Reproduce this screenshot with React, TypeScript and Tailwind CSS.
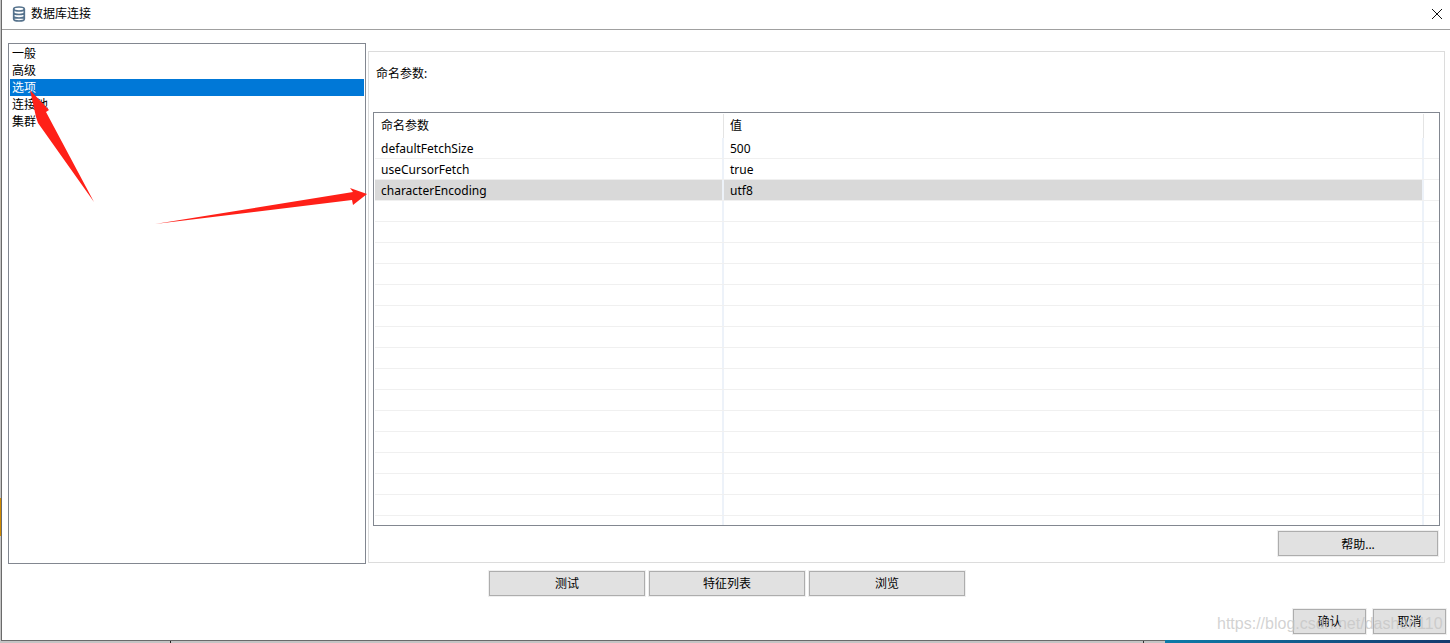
const font = "font-['Noto_Sans','Noto_Sans_CJK_SC',sans-serif]";

function Btn({ label, w }: { label: string; w: string }) {
  return (
    <div className={`${w} h-[25px] border border-[#adadad] bg-[#e1e1e1] shadow-[0_0_0_1px_#efefef] flex items-center justify-center text-[12px] text-black`}>
      {label}
    </div>
  );
}

const rows = [
  ["defaultFetchSize", "500"],
  ["useCursorFetch", "true"],
  ["characterEncoding", "utf8"],
  ...Array.from({ length: 16 }, () => ["", ""]),
];

export default function App() {
  return (
    <div className={`${font} relative w-[1450px] h-[643px] overflow-hidden bg-[#c4c4c4] text-[12px] text-black`}>
      <div className="h-[641px] border-l border-b border-[#6a6a6a] bg-white flex flex-col ml-px">
        <div className="h-[30px] shrink-0 border-b border-[#a0a0a0] flex items-center pl-[10px] pr-[7px] pb-[2px]">
          <svg width="14" height="16" viewBox="0 0 14 16" fill="none" stroke="#55728c" strokeWidth="1.7">
            <ellipse cx="7" cy="3" rx="5.3" ry="2" />
            <path d="M1.7 3v10c0 1.2 2.4 2 5.3 2s5.3-.8 5.3-2V3M1.7 6.5c0 1.2 2.4 2 5.3 2s5.3-.8 5.3-2M1.7 10c0 1.2 2.4 2 5.3 2s5.3-.8 5.3-2" />
          </svg>
          <span className="ml-[5px]">数据库连接</span>
          <svg className="ml-auto" width="12" height="12" viewBox="0 0 12 12" stroke="#111" strokeWidth="1">
            <path d="M1 1l10 10M11 1L1 11" />
          </svg>
        </div>
        <div className="flex flex-1 min-h-0 pl-[6px] pt-[13px]">
          <div className="w-[358px] h-[521px] shrink-0 border border-[#828790] p-px">
            {["一般", "高级", "选项", "连接池", "集群"].map((t, i) => (
              <div key={t} className={`h-[17px] pl-[2px] leading-[17px] ${i === 2 ? "bg-[#0078d7] text-white" : ""}`}>{t}</div>
            ))}
          </div>
          <div className="flex-1 min-w-0">
            <div className="ml-[2px] mt-[8px] w-[1077px] h-[512px] border border-[#dcdcdc] pl-[4px] pt-[14px] flex flex-col">
              <div className="pl-[3px] h-[17px] leading-[15px]">命名参数:</div>
              <div className="mt-[29px] w-[1067px] h-[414px] border border-[#828790] pl-[1px] pt-px overflow-hidden relative">
                <div className="flex h-[24px]">
                  <div className="w-[349px] pl-[6px] leading-[24px] border-r border-[#e4e4e4]">命名参数</div>
                  <div className="w-[700px] pl-[6px] leading-[24px] border-r border-[#e4e4e4]">值</div>
                </div>
                {rows.map(([a, b], i) => (
                  <div key={i} className="flex h-[21px] w-[1064px] border-b border-[#f0f0f0]">
                    <div className={`w-[349px] pl-[6px] leading-[21px] border-r-2 border-[#edf2f9] ${i === 2 ? "bg-[#d9d9d9]" : ""}`}>{a}</div>
                    <div className={`w-[700px] pl-[6px] leading-[21px] border-r-2 border-[#edf2f9] ${i === 2 ? "bg-[#d9d9d9]" : ""}`}>{b}</div>
                  </div>
                ))}
              </div>
              <div className="mt-[5px] flex justify-end pr-[6px]">
                <Btn label="帮助..." w="w-[160px] pt-[2px]" />
              </div>
            </div>
          </div>
        </div>
        <div className="absolute left-[489px] top-[571px] flex gap-[4px]">
          <Btn label="测试" w="w-[156px]" />
          <Btn label="特征列表" w="w-[156px]" />
          <Btn label="浏览" w="w-[156px]" />
        </div>
        <div className="absolute left-[1293px] top-[609px] flex gap-[7px]">
          <Btn label="确认" w="w-[73px]" />
          <Btn label="取消" w="w-[73px]" />
        </div>
      </div>
      <div className="absolute left-0 top-[498px] w-px h-[38px] bg-[#d08a00]" />
      <div className="absolute left-[170px] top-[641px] w-px h-[2px] bg-[#222]" />
      <div className="absolute left-[1143px] top-[641px] w-px h-[2px] bg-[#333]" />
      <div className="absolute left-[1165px] top-[640px] w-[285px] h-[3px] bg-gradient-to-r from-[#0b7ba8] to-[#143a6e]" />
      <svg className="absolute left-0 top-0 pointer-events-none" width="1450" height="643" fill="#ff2018">
        <path d="M30 90 L49 110 L46 112 L94 202 L38 123 L36 117 Z" />
        <path d="M155 224 L353 192 L350 188 L367 194 L353 205 L352 200 Z" />
      </svg>
      <div className="absolute left-[1217px] top-[612px] font-['Liberation_Sans',sans-serif] text-[16px] leading-[24px] text-[#c4c4c4]/75 whitespace-nowrap">https://blog.csdn.net/dashen110</div>
    </div>
  );
}
